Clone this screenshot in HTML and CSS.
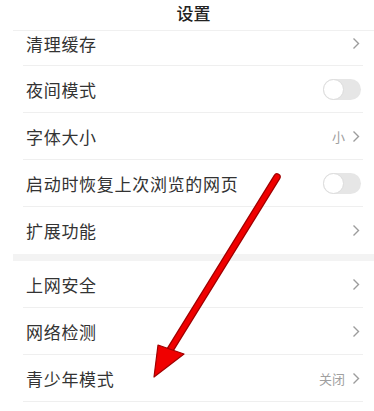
FILE: index.html
```html
<!DOCTYPE html>
<html lang="zh">
<head>
<meta charset="utf-8">
<link rel="stylesheet" href="styles.css">
</head>
<body>
<div class="page">
  <div class="title">设置</div>
  <div class="list">
    <div class="row first"><span class="label">清理缓存</span><span class="right"><svg class="chev" width="8" height="13" viewBox="0 0 8 13"><polyline points="1.5,1.5 6.5,6.5 1.5,11.5" fill="none" stroke="#9c9c9c" stroke-width="1.4"/></svg></span></div>
    <div class="row"><span class="label">夜间模式</span><span class="right"><span class="toggle"><span class="knob"></span></span></span></div>
    <div class="row"><span class="label">字体大小</span><span class="right"><span class="val">小</span><svg class="chev" width="8" height="13" viewBox="0 0 8 13"><polyline points="1.5,1.5 6.5,6.5 1.5,11.5" fill="none" stroke="#9c9c9c" stroke-width="1.4"/></svg></span></div>
    <div class="row"><span class="label">启动时恢复上次浏览的网页</span><span class="right"><span class="toggle"><span class="knob"></span></span></span></div>
    <div class="row last"><span class="label">扩展功能</span><span class="right"><svg class="chev" width="8" height="13" viewBox="0 0 8 13"><polyline points="1.5,1.5 6.5,6.5 1.5,11.5" fill="none" stroke="#9c9c9c" stroke-width="1.4"/></svg></span></div>
  </div>
  <div class="band"></div>
  <div class="list">
    <div class="row"><span class="label">上网安全</span><span class="right"><svg class="chev" width="8" height="13" viewBox="0 0 8 13"><polyline points="1.5,1.5 6.5,6.5 1.5,11.5" fill="none" stroke="#9c9c9c" stroke-width="1.4"/></svg></span></div>
    <div class="row"><span class="label">网络检测</span><span class="right"><svg class="chev" width="8" height="13" viewBox="0 0 8 13"><polyline points="1.5,1.5 6.5,6.5 1.5,11.5" fill="none" stroke="#9c9c9c" stroke-width="1.4"/></svg></span></div>
    <div class="row"><span class="label">青少年模式</span><span class="right"><span class="val">关闭</span><svg class="chev" width="8" height="13" viewBox="0 0 8 13"><polyline points="1.5,1.5 6.5,6.5 1.5,11.5" fill="none" stroke="#9c9c9c" stroke-width="1.4"/></svg></span></div>
  </div>
  <svg class="arrow" width="374" height="411" viewBox="0 0 374 411">
    <line x1="277" y1="177" x2="170" y2="350" stroke="#a00000" stroke-width="7.5" stroke-linecap="round"/>
    <line x1="277" y1="177" x2="170" y2="350" stroke="#f00000" stroke-width="5" stroke-linecap="round"/>
    <polygon points="154,377 158,345 184,354" fill="#f00000" stroke="#a00000" stroke-width="1.2" stroke-linejoin="round"/>
  </svg>
</div>
</body>
</html>
```
FILE: styles.css
```css
html, body {
  margin: 0;
  padding: 0;
  background: #fff;
}
.page {
  position: relative;
  width: 374px;
  height: 411px;
  overflow: hidden;
  font-family: "Noto Sans CJK SC", "Noto Sans", sans-serif;
  color: #333;
}
.title {
  height: 31px;
  line-height: 26px;
  text-align: center;
  font-size: 17px;
  font-weight: 500;
  color: #222;
  margin-left: 13px;
  border-bottom: 1px solid #f0f0f0;
  box-sizing: border-box;
}
.list {
  padding: 0 11px 0 23px;
}
.row {
  height: 47px;
  box-sizing: border-box;
  border-bottom: 1px solid #efefef;
  display: flex;
  align-items: center;
  justify-content: space-between;
  padding-left: 3px;
}
.row.first {
  height: 35px;
  align-items: flex-start;
}
.row.first .label, .row.first .right {
  line-height: 25px;
  height: 25px;
}
.row.last {
  border-bottom: none;
}
.label {
  font-size: 17px;
  letter-spacing: 0.7px;
  color: #333;
}
.right {
  display: flex;
  align-items: center;
  gap: 7px;
}
.val {
  font-size: 13px;
  color: #a0a0a0;
}
.chev {
  display: block;
  margin-right: 3px;
}
.toggle {
  position: relative;
  display: block;
  width: 38px;
  height: 21px;
  border-radius: 11px;
  background: #e6e6e6;
  margin-right: 2px;
}
.knob {
  position: absolute;
  left: 0;
  top: 0;
  width: 19px;
  height: 19px;
  border-radius: 50%;
  background: #fff;
  border: 1px solid #dcdcdc;
}
.band {
  height: 7px;
  background: #f3f3f3;
  margin-left: 13px;
}
.arrow {
  position: absolute;
  left: 0;
  top: 0;
}
```
